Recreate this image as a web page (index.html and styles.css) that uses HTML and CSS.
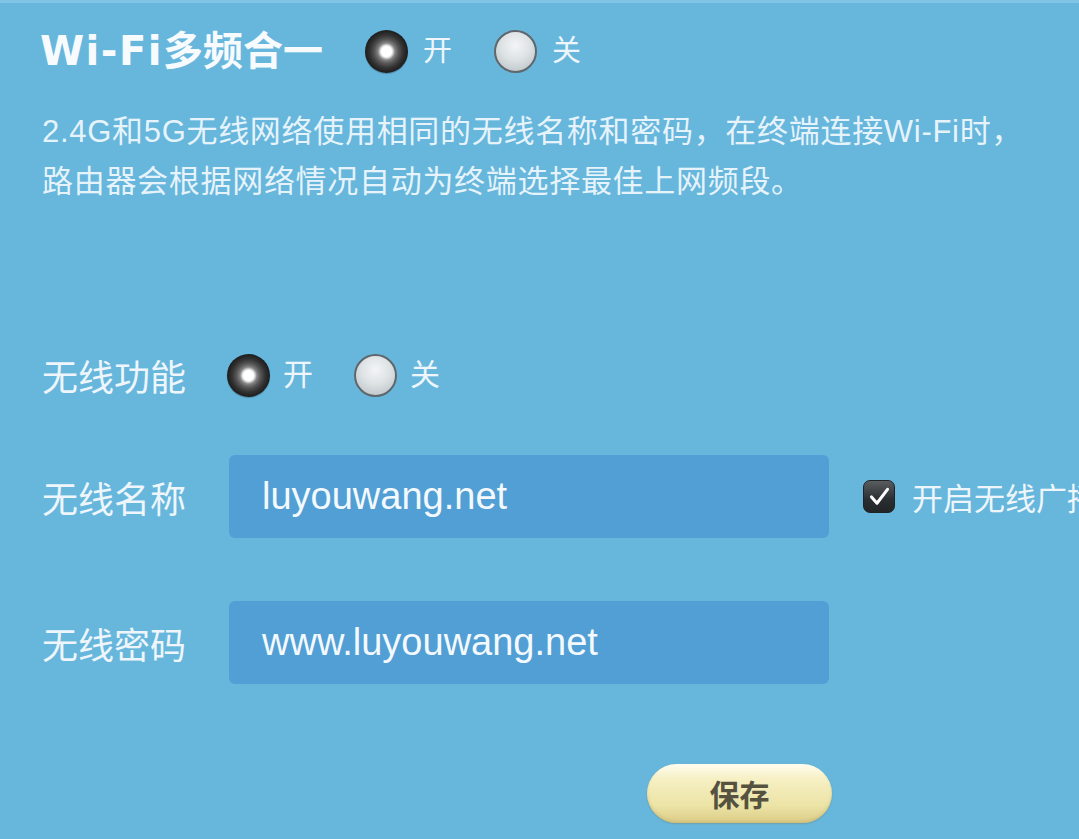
FILE: index.html
```html
<!DOCTYPE html>
<html lang="zh-CN">
<head>
<meta charset="utf-8">
<title>Wi-Fi设置</title>
<link rel="stylesheet" href="styles.css">
</head>
<body>
<div class="topline"></div>
<main class="page">
  <div class="title-row">
    <h1 class="title"><span class="title-latin">Wi-Fi</span>多频合一</h1>
    <div class="radios">
      <span class="radio on"></span><span class="rlabel">开</span>
      <span class="radio off"></span><span class="rlabel">关</span>
    </div>
  </div>
  <p class="desc">2.4G和5G无线网络使用相同的无线名称和密码，在终端连接Wi-Fi时，<br>路由器会根据网络情况自动为终端选择最佳上网频段。</p>

  <div class="row row-func">
    <span class="label">无线功能</span>
    <div class="radios radios-small">
      <span class="radio on"></span><span class="rlabel">开</span>
      <span class="radio off"></span><span class="rlabel">关</span>
    </div>
  </div>

  <div class="row row-name">
    <span class="label">无线名称</span>
    <div class="input">luyouwang.net</div>
    <span class="check"><svg viewBox="0 0 32 32" width="27" height="27"><path d="M6.5 16.5 L13 24 L25.5 7.5" fill="none" stroke="#fff" stroke-width="3.6" stroke-linecap="round" stroke-linejoin="round"/></svg></span>
    <span class="check-label">开启无线广播</span>
  </div>

  <div class="row row-pass">
    <span class="label">无线密码</span>
    <div class="input">www.luyouwang.net</div>
  </div>

  <div class="actions">
    <button class="save">保存</button>
  </div>
</main>
</body>
</html>
```
FILE: styles.css
```css
html, body {
  margin: 0;
  padding: 0;
  width: 1079px;
  height: 839px;
  overflow: hidden;
  background: #67b7dd;
}
body {
  font-family: "Liberation Sans", "Noto Sans CJK SC", sans-serif;
  color: #f4f9fc;
}
.topline {
  height: 3px;
  background: #80c4e6;
}
.page {
  padding-left: 40px;
  white-space: nowrap;
}
.title-row {
  display: flex;
  align-items: center;
  height: 44px;
  margin-top: 26px;
}
.title {
  margin: 0;
  font-size: 40px;
  font-weight: 700;
  color: #f7fbfe;
  line-height: 44px;
}
.title-latin {
  font-family: "DejaVu Sans", "Liberation Sans", sans-serif;
  font-weight: 700;
  letter-spacing: 1.5px;
}
.radios {
  display: flex;
  align-items: center;
  margin-left: 42px;
}
.radios-small {
  margin-left: -2px;
}
.radio {
  width: 43px;
  height: 43px;
  border-radius: 50%;
  box-sizing: border-box;
  flex: none;
}
.radio.on {
  background: radial-gradient(circle, #ffffff 0 5px, #d6d6d6 6.5px, #858585 8.5px, #575757 12px, #333 16.5px, #1c1c1c 21.5px);
  box-shadow: 0 1px 1px rgba(0,0,0,0.25);
}
.radio.off {
  border: 2px solid #5f676c;
  background: radial-gradient(circle at 50% 35%, #f3f5f6 0, #dde2e4 45%, #bfc6ca 85%, #a7afb3 100%);
}
.rlabel {
  font-size: 29px;
  line-height: 44px;
  margin-left: 15px;
  margin-right: 42px;
  color: #eef6fb;
}
.radios-small .rlabel {
  font-size: 30px;
  margin-left: 13px;
  margin-right: 41px;
}
.desc {
  margin: 34px 0 0 2px;
  font-size: 31px;
  line-height: 50px;
  letter-spacing: 0.7px;
  color: rgba(244, 250, 253, 0.92);
}
.row {
  display: flex;
  align-items: center;
}
.label {
  width: 189px;
  flex: none;
  padding-left: 2px;
  box-sizing: border-box;
  font-size: 36px;
  color: #eef6fb;
}
.row-func {
  height: 44px;
  margin-top: 146px;
}
.row-name {
  margin-top: 58px;
}
.row-pass {
  margin-top: 63px;
}
.input {
  width: 600px;
  height: 83px;
  box-sizing: border-box;
  border-radius: 6px;
  background: #519fd4;
  padding-left: 33px;
  font-size: 38px;
  line-height: 83px;
  color: #f4f9fd;
  flex: none;
}
.check {
  width: 32px;
  height: 33px;
  box-sizing: border-box;
  margin-left: 34px;
  border-radius: 7px;
  border: 1px solid #1f2326;
  background: linear-gradient(#5a5d60, #2b2e31 60%, #222528);
  display: flex;
  align-items: center;
  justify-content: center;
  flex: none;
}
.check-label {
  margin-left: 17px;
  font-size: 31px;
  color: #eef6fb;
}
.actions {
  margin-top: 80px;
  padding-left: 607px;
}
.save {
  width: 185px;
  height: 59px;
  border: none;
  border-radius: 30px;
  background: linear-gradient(#fffdf0 0%, #f6f0c4 25%, #ece3a6 70%, #dccd88 100%);
  box-shadow: 0 1px 2px rgba(120, 110, 60, 0.35), inset 0 -2px 3px rgba(190, 170, 100, 0.4);
  font-family: "Noto Sans CJK SC", sans-serif;
  font-size: 30px;
  font-weight: 700;
  color: #55533f;
  padding: 0;
  line-height: 59px;
}
```
